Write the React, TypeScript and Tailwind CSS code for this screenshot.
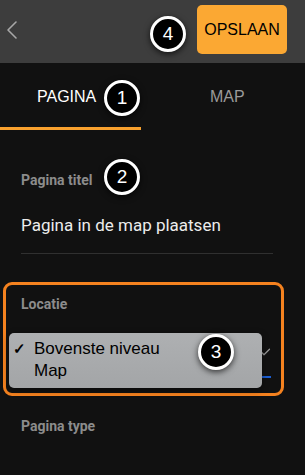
import { ChevronLeft, ChevronDown } from "lucide-react";

function Badge({ n, className }: { n: number; className: string }) {
    return (
        <div
            className={`absolute w-[36px] h-[36px] rounded-full bg-black border-[3px] border-white flex items-center justify-center text-white text-[19px] font-['Liberation_Sans',Arial,sans-serif] shadow-[0_2px_6px_rgba(0,0,0,0.7)] ${className}`}
        >
            {n}
        </div>
    );
}

export default function App() {
    return (
        <div className="relative w-[305px] h-[475px] bg-[#111111] overflow-hidden font-['Roboto','Liberation_Sans',sans-serif]">
            {/* Header */}
            <div className="h-[63px] bg-[#3d3d3d] flex items-start">
                <ChevronLeft size={32} strokeWidth={1.2} className="text-[#a8a8a8] mt-[14px] ml-[-4px]" />
                <button className="ml-auto mr-[18px] mt-[5px] w-[90px] h-[49px] rounded-[5px] bg-[#fba833] text-black text-[16px] font-['Liberation_Sans',Arial,sans-serif]">
                    OPSLAAN
                </button>
            </div>

            {/* Tabs */}
            <div className="h-[67px] flex font-['Liberation_Sans',Arial,sans-serif] text-[16px]">
                <div className="w-[141px] flex flex-col">
                    <div className="flex-1 flex items-center pl-[37px] pt-[3px] text-white">PAGINA</div>
                    <div className="h-[3px] bg-[#f9a12e]" />
                </div>
                <div className="flex-1 flex items-center pl-[69px] text-[#9a9a9a]">MAP</div>
            </div>

            {/* Pagina titel */}
            <div className="px-[21px] pt-[42px]">
                <div className="text-[14px] font-bold text-[#8c8c8c] leading-[17px]">Pagina titel</div>
                <div className="mt-[26px] text-[17px] text-[#ececec] leading-[20px]">Pagina in de map plaatsen</div>
                <div className="mt-[18px] mr-[11px] h-px bg-[#303030]" />
            </div>

            {/* Locatie */}
            <div className="mt-[28px] ml-[3px] w-[281px] h-[114px] rounded-[9px] border-[3px] border-[#f5821f] px-[15px] pt-[11px]">
                <div className="text-[14px] font-bold text-[#8c8c8c] leading-[17px]">Locatie</div>
                <div className="relative mt-[35px] h-[40px]">
                    <ChevronDown size={22} strokeWidth={1.3} className="absolute right-[-9px] top-[-7px] text-[#9a9a9a]" />
                    <div className="absolute left-0 right-[-5px] top-[28px] h-[2px] bg-[#1c5fd4]" />
                </div>
            </div>

            <div className="px-[21px] pt-[22px]">
                <div className="text-[14px] font-bold text-[#8c8c8c] leading-[17px]">Pagina type</div>
            </div>

            {/* Popup menu over the select */}
            <div className="absolute left-[9px] top-[333px] w-[253px] h-[55px] rounded-[5px] bg-gradient-to-b from-[#aeb0b2] to-[#a3a5a7] shadow-[0_2px_6px_rgba(0,0,0,0.5)] text-black text-[17px] leading-[22px] pt-[5px] font-['Liberation_Sans',Arial,sans-serif]">
                <div className="flex">
                    <span className="w-[25px] pl-[4px] text-[15px] font-bold">✓</span>
                    <span>Bovenste niveau</span>
                </div>
                <div className="pl-[25px]">Map</div>
            </div>

            <Badge n={4} className="left-[150px] top-[16px]" />
            <Badge n={1} className="left-[104px] top-[80px]" />
            <Badge n={2} className="left-[104px] top-[159px]" />
            <Badge n={3} className="left-[198px] top-[334px]" />
        </div>
    );
}
